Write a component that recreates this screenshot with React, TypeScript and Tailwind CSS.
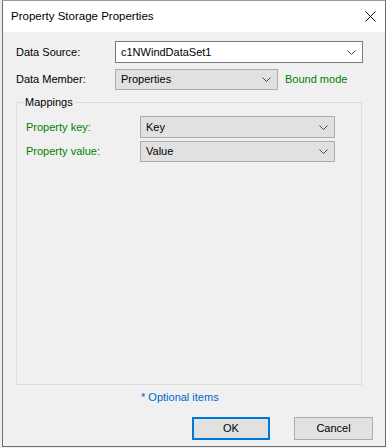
const font = { fontFamily: '"Liberation Sans", Arial, sans-serif' };

const Chevron = () => (
  <svg width="9" height="5" viewBox="0 0 9 5" className="shrink-0">
    <path d="M0.5 0.5 L4.5 4.5 L8.5 0.5" fill="none" stroke="#444" strokeWidth="1" />
  </svg>
);

interface ComboProps {
  value: string;
  width: string;
  height: string;
  editable?: boolean;
}

const Combo: React.FC<ComboProps> = ({ value, width, height, editable }) => (
  <div
    className={`flex items-center justify-between pl-[5px] pr-[6px] border ${width} ${height} ${
      editable ? "bg-white border-[#7a7a7a]" : "bg-[#e1e1e1] border-[#adadad]"
    }`}
  >
    <span className="text-[11px] text-black leading-none">{value}</span>
    <Chevron />
  </div>
);

export default function App() {
  return (
    <div className="w-[386px] h-[448px] bg-[#ececec] overflow-hidden" style={font}>
      <div className="ml-[2px] w-[384px] h-[447px] flex flex-col border border-[#6d6d6d] border-t-[#9a9a9a] bg-[#f0f0f0]">
        {/* title bar */}
        <div className="h-[31px] bg-white flex items-center justify-between pl-[8px] pr-[8px] shrink-0">
          <span className="text-[11.5px] text-black">Property Storage Properties</span>
          <svg width="11" height="11" viewBox="0 0 11 11" className="mr-[1px] -mt-[1px]">
            <path d="M0.5 0.5 L10.5 10.5 M10.5 0.5 L0.5 10.5" stroke="#111" strokeWidth="1" />
          </svg>
        </div>

        <div className="flex flex-col pl-[13px] pr-[12px] flex-1">
          {/* Data Source */}
          <div className="flex items-center mt-[9px] h-[22px]">
            <span className="w-[99px] text-[11px] text-black">Data Source:</span>
            <Combo value="c1NWindDataSet1" width="w-[248px]" height="h-[22px]" editable />
          </div>

          {/* Data Member */}
          <div className="flex items-center mt-[6px] h-[21px]">
            <span className="w-[99px] text-[11px] text-black">Data Member:</span>
            <Combo value="Properties" width="w-[163px]" height="h-[21px]" />
            <span className="ml-[7px] text-[11px] text-[#008000]">Bound mode</span>
          </div>

          {/* Mappings group */}
          <div className="relative mt-[12px] w-[346px] h-[283px] border border-[#dcdcdc]">
            <span className="absolute -top-[8px] left-[7px] px-[1px] bg-[#f0f0f0] text-[11px] text-black leading-[14px]">
              Mappings
            </span>
            <div className="flex flex-col pl-[9px] pt-[13px]">
              <div className="flex items-center h-[22px]">
                <span className="w-[114px] text-[11px] text-[#008000]">Property key:</span>
                <Combo value="Key" width="w-[195px]" height="h-[22px]" />
              </div>
              <div className="flex items-center mt-[3px] h-[21px]">
                <span className="w-[114px] text-[11px] text-[#008000]">Property value:</span>
                <Combo value="Value" width="w-[195px]" height="h-[21px]" />
              </div>
            </div>
          </div>

          {/* optional */}
          <div className="flex pl-[125px] mt-[5px]">
            <span className="text-[11px] text-[#0066cc] leading-[14px]">* Optional items</span>
          </div>

          {/* buttons */}
          <div className="flex justify-end gap-[24px] mt-[13px]">
            <button className="w-[78px] h-[23px] bg-[#e1e1e1] border-2 border-[#0078d7] text-[11px] text-black flex items-center justify-center">
              OK
            </button>
            <button className="w-[79px] h-[23px] bg-[#e1e1e1] border border-[#adadad] text-[11px] text-black flex items-center justify-center">
              Cancel
            </button>
          </div>
        </div>
      </div>
    </div>
  );
}
